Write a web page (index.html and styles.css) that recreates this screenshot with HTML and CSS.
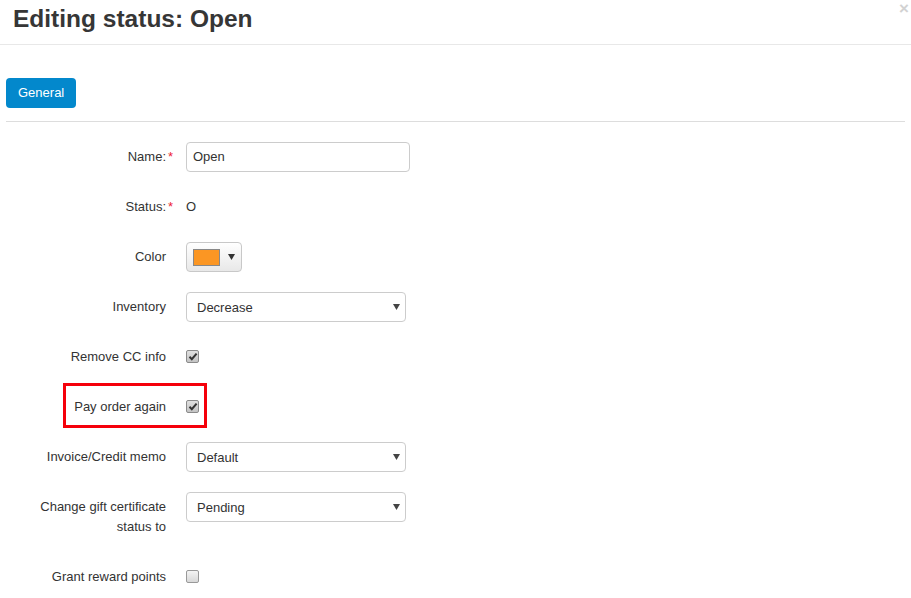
FILE: index.html
```html
<!DOCTYPE html>
<html>
<head>
<meta charset="utf-8">
<link rel="stylesheet" href="styles.css">
</head>
<body>
<div class="header">
  <h1 class="title">Editing status: Open</h1>
  <span class="close">&times;</span>
</div>
<div class="content">
  <div class="tabs">
    <button class="tab">General</button>
  </div>
  <div class="form">
    <div class="row">
      <label class="label required">Name:</label>
      <div class="control"><div class="input">Open</div></div>
    </div>
    <div class="row">
      <label class="label required">Status:</label>
      <div class="control"><span class="value">O</span></div>
    </div>
    <div class="row">
      <label class="label">Color</label>
      <div class="control">
        <div class="color-btn"><span class="swatch"></span><svg class="caret" width="7" height="6" viewBox="0 0 7 6"><path d="M0 0H7L3.5 6Z" fill="#333"/></svg></div>
      </div>
    </div>
    <div class="row">
      <label class="label">Inventory</label>
      <div class="control"><div class="select"><span>Decrease</span><svg width="7" height="6" viewBox="0 0 7 6"><path d="M0 0H7L3.5 6Z" fill="#444"/></svg></div></div>
    </div>
    <div class="row">
      <label class="label">Remove CC info</label>
      <div class="control"><span class="checkbox checked"><svg width="10" height="9" viewBox="0 0 10 9"><path d="M1.5 4.8L3.8 7.2L8.6 1.6" fill="none" stroke="#333" stroke-width="2"/></svg></span></div>
    </div>
    <div class="row highlight-row">
      <label class="label">Pay order again</label>
      <div class="control"><span class="checkbox checked"><svg width="10" height="9" viewBox="0 0 10 9"><path d="M1.5 4.8L3.8 7.2L8.6 1.6" fill="none" stroke="#333" stroke-width="2"/></svg></span></div>
      <span class="annotation"></span>
    </div>
    <div class="row">
      <label class="label">Invoice/Credit memo</label>
      <div class="control"><div class="select"><span>Default</span><svg width="7" height="6" viewBox="0 0 7 6"><path d="M0 0H7L3.5 6Z" fill="#444"/></svg></div></div>
    </div>
    <div class="row">
      <label class="label">Change gift certificate status to</label>
      <div class="control"><div class="select"><span>Pending</span><svg width="7" height="6" viewBox="0 0 7 6"><path d="M0 0H7L3.5 6Z" fill="#444"/></svg></div></div>
    </div>
    <div class="row">
      <label class="label">Grant reward points</label>
      <div class="control"><span class="checkbox"></span></div>
    </div>
  </div>
</div>
</body>
</html>
```
FILE: styles.css
```css
html, body {
  margin: 0;
  padding: 0;
  background: #fff;
}
body {
  font-family: "Liberation Sans", Arial, sans-serif;
  font-size: 13px;
  color: #333;
  width: 911px;
  height: 598px;
  overflow: hidden;
}
.header {
  height: 44px;
  border-bottom: 1px solid #e8e8e8;
  display: flex;
  justify-content: space-between;
  align-items: flex-start;
  padding: 0 2px 0 13px;
}
.title {
  margin: 0;
  padding-top: 5px;
  font-size: 24.5px;
  line-height: 28px;
  font-weight: bold;
  color: #363636;
}
.close {
  font-size: 17px;
  line-height: 17px;
  font-weight: bold;
  color: #d2d2d2;
  margin-top: 0;
}
.content {
  padding: 0 6px;
}
.tabs {
  padding-top: 33px;
  padding-bottom: 13px;
  border-bottom: 1px solid #dddddd;
  display: flex;
}
.tab {
  height: 30px;
  padding: 0 12px;
  border: none;
  border-radius: 4px;
  background: #0388cc;
  color: #fff;
  font-family: "Liberation Sans", Arial, sans-serif;
  font-size: 13px;
  line-height: 30px;
}
.form {
  padding-top: 20px;
}
.row {
  display: flex;
  align-items: flex-start;
  margin-bottom: 20px;
  position: relative;
}
.label {
  width: 160px;
  flex: none;
  text-align: right;
  padding: 5px 0;
  line-height: 20px;
  position: relative;
}
.label.required::after {
  content: "*";
  color: #e23;
  position: absolute;
  right: -7px;
  top: 5px;
}
.control {
  margin-left: 20px;
  min-height: 30px;
  display: flex;
  align-items: center;
}
.input {
  width: 224px;
  height: 30px;
  box-sizing: border-box;
  border: 1px solid #ccc;
  border-radius: 4px;
  padding: 0 6px;
  line-height: 28px;
  color: #333;
}
.value {
  line-height: 30px;
}
.color-btn {
  width: 56px;
  height: 30px;
  box-sizing: border-box;
  border: 1px solid #c8c8c8;
  border-radius: 4px;
  background: linear-gradient(#ffffff, #e8e8e8);
  display: flex;
  align-items: center;
  padding-left: 6px;
  gap: 8px;
}
.swatch {
  width: 27px;
  height: 17px;
  box-sizing: border-box;
  border: 1px solid #888;
  background: #fb9623;
}
.select {
  width: 220px;
  height: 30px;
  box-sizing: border-box;
  border: 1px solid #ccc;
  border-radius: 4px;
  padding: 0 5px 0 10px;
  display: flex;
  justify-content: space-between;
  align-items: center;
  color: #333;
}
.checkbox {
  width: 13px;
  height: 13px;
  box-sizing: border-box;
  border: 1px solid #999;
  border-radius: 2px;
  background: linear-gradient(#f4f4f4, #d8d8d8);
  display: flex;
  align-items: center;
  justify-content: center;
  margin-top: -1px;
}
.checkbox.checked {
  border-color: #8a8a8a;
  background: linear-gradient(#e0e0e0, #c4c4c4);
}
.annotation {
  position: absolute;
  left: 57px;
  top: -9px;
  width: 144px;
  height: 45px;
  box-sizing: border-box;
  border: 3px solid #f5000a;
}
```
